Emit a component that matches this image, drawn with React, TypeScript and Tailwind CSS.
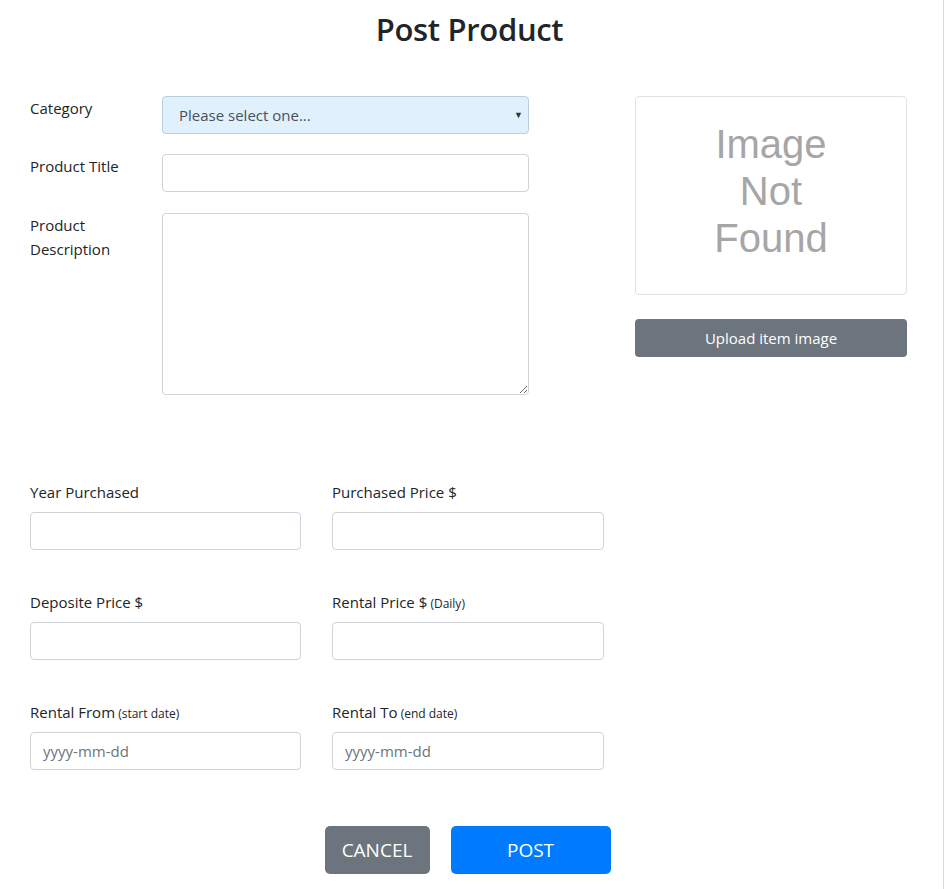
import React from "react";

const inputCls =
    "block h-[38px] w-full rounded-[4px] border border-[#ced4da] bg-white px-3 text-[15px] text-[#495057] placeholder-[#6c757d] outline-none";

function Field({ label, hint, placeholder }: { label: string; hint?: string; placeholder?: string }) {
    return (
        <div className="flex flex-col">
            <label className="mb-2 h-6 leading-6 text-[#212529]">
                {label}
                {hint && <span className="text-[12px] leading-none"> ({hint})</span>}
            </label>
            <input type="text" placeholder={placeholder} className={inputCls} />
        </div>
    );
}

export default function App() {
    return (
        <div
            className="min-h-screen w-[944px] border-r border-[#d9d9d9] bg-white text-[15px] text-[#212529]"
            style={{ fontFamily: "'Open Sans', 'Noto Sans', sans-serif" }}
        >
            <h2 className="pt-[10px] pr-[4px] text-center text-[31px] font-semibold leading-[38px] tracking-[-0.01em] text-[#212529]">
                Post Product
            </h2>

            <div className="mt-[48px] flex pl-[30px]">
                {/* left column */}
                <div className="w-[575px]">
                    <div className="flex">
                        <label className="w-[132px] leading-6">Category</label>
                        <div className="relative w-[367px]">
                            <select className="block h-[38px] w-full appearance-none rounded-[4px] border border-[#b8cfe0] bg-[#e1f0fd] pl-4 pr-8 text-[15px] text-[#495057] outline-none">
                                <option>Please select one...</option>
                            </select>
                            <span className="pointer-events-none absolute right-[6px] top-[12px] text-[9px] text-[#333]">▼</span>
                        </div>
                    </div>
                    <div className="mt-[20px] flex">
                        <label className="w-[132px] leading-6">Product Title</label>
                        <input type="text" className={`${inputCls} !w-[367px]`} />
                    </div>
                    <div className="mt-[21px] flex">
                        <label className="w-[132px] leading-6">
                            Product
                            <br />
                            Description
                        </label>
                        <textarea className="block h-[182px] w-[367px] rounded-[4px] border border-[#ced4da] bg-white px-3 py-2 outline-none" />
                    </div>

                    <div className="mt-[85px] grid grid-cols-[271px_272px] gap-x-[31px] gap-y-[40px]">
                        <Field label="Year Purchased" />
                        <Field label="Purchased Price $" />
                        <Field label="Deposite Price $" />
                        <Field label="Rental Price $" hint="Daily" />
                        <Field label="Rental From" hint="start date" placeholder="yyyy-mm-dd" />
                        <Field label="Rental To" hint="end date" placeholder="yyyy-mm-dd" />
                    </div>
                </div>

                {/* right column */}
                <div className="ml-[30px] w-[272px]">
                    <div className="flex h-[199px] items-center justify-center rounded-[4px] border border-[#dee2e6] bg-white">
                        <div
                            className="pb-[8px] text-center text-[40px] leading-[47px] text-[#a6a6a6]"
                            style={{ fontFamily: "'Liberation Sans', Arial, sans-serif" }}
                        >
                            Image
                            <br />
                            Not
                            <br />
                            Found
                        </div>
                    </div>
                    <button className="mt-[24px] h-[38px] w-full rounded-[4px] bg-[#6c757d] text-white">
                        Upload item image
                    </button>
                </div>
            </div>

            <div className="mt-[56px] flex justify-center gap-[21px] pr-[8px]">
                <button className="h-[48px] w-[105px] rounded-[5px] bg-[#6c757d] text-[19px] text-white">CANCEL</button>
                <button className="h-[48px] w-[160px] rounded-[5px] bg-[#007bff] text-[19px] text-white">POST</button>
            </div>
        </div>
    );
}
